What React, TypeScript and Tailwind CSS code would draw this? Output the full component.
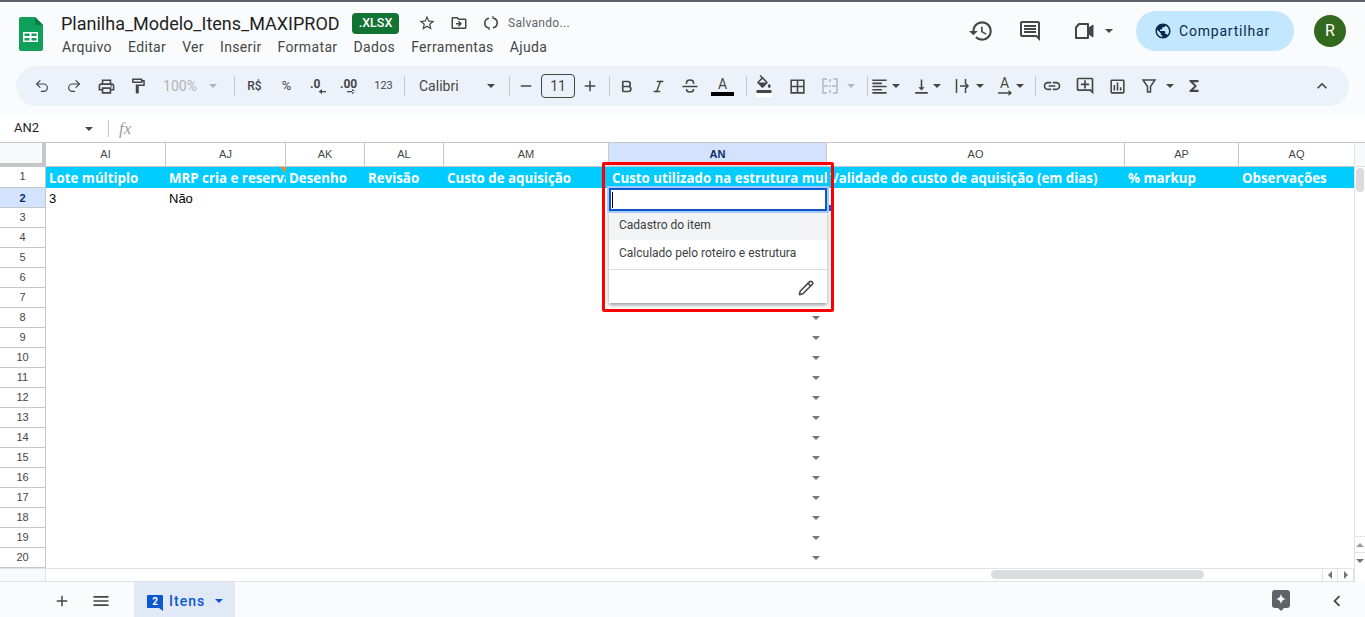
import {
  MdOutlinePrint, MdOutlineFormatPaint,
  MdOutlineFormatColorFill, MdBorderAll, MdFormatAlignLeft, MdVerticalAlignBottom, MdLink,
  MdOutlineAddComment, MdOutlineInsertChart, MdFunctions, MdKeyboardArrowUp, MdHistory,
  MdOutlineComment, MdStarBorder, MdOutlineDriveFileMove, MdAdd, MdRemove, MdMenu, MdChevronLeft,
  MdPublic,
} from "react-icons/md";
import { Undo2, Redo2, Bold, Italic, Pencil } from "lucide-react";

const columns = [
  { name: "AI", width: "w-[120px]", title: "Lote múltiplo" },
  { name: "AJ", width: "w-[120px]", title: "MRP cria e reserva" },
  { name: "AK", width: "w-[79px]", title: "Desenho" },
  { name: "AL", width: "w-[79px]", title: "Revisão" },
  { name: "AM", width: "w-[165px]", title: "Custo de aquisição" },
  { name: "AN", width: "w-[218px]", title: "Custo utilizado na estrutura multinível" },
  { name: "AO", width: "w-[298px]", title: "Validade do custo de aquisição (em dias)" },
  { name: "AP", width: "w-[114px]", title: "% markup" },
  { name: "AQ", width: "w-[116px]", title: "Observações" },
];

const rows = Array.from({ length: 18 }, (_, i) => i + 3);

function Caret({ className = "", tone = "border-t-[#444746]" }: { className?: string; tone?: string }) {
  return <span className={`inline-block shrink-0 w-0 h-0 border-x-[4px] border-x-transparent border-t-[4px] ${tone} ${className}`} />;
}

function Tool({ children, className = "w-8" }: { children?: React.ReactNode; className?: string }) {
  return <div className={`h-6 flex items-center justify-center shrink-0 text-[#444746] ${className}`}>{children}</div>;
}

function Sep({ className = "" }: { className?: string }) {
  return <div className={`w-px h-5 bg-[#c7c7c7] shrink-0 ${className}`} />;
}

function SheetsLogo() {
  return (
    <svg width="24" height="34" viewBox="0 0 24 34">
      <path d="M2 0H16L24 8V32a2 2 0 0 1-2 2H2a2 2 0 0 1-2-2V2a2 2 0 0 1 2-2Z" fill="#0fa05a" />
      <path d="M16 0L24 8H18a2 2 0 0 1-2-2Z" fill="#0b7a44" />
      <path d="M4 15H19V25H4ZM5.5 16.5V19H10.5V16.5ZM12.5 16.5V19H17.5V16.5ZM5.5 21V23.5H10.5V21ZM12.5 21V23.5H17.5V21Z" fill="#fff" fillRule="evenodd" />
    </svg>
  );
}

function Header() {
  return (
    <div className="h-[64px] shrink-0 flex items-start bg-[#f9fbfd] border-t-2 border-[#5f6368]">
      <div className="ml-[19px] mt-[15px]"><SheetsLogo /></div>
      <div className="ml-[18px] mt-[8px]">
        <div className="flex items-center h-[26px]">
          <span className="text-[18px] text-[#1f1f1f] w-[279px] whitespace-nowrap">Planilha_Modelo_Itens_MAXIPROD</span>
          <span className="ml-[12px] h-[21px] w-[47px] rounded bg-[#137333] text-white text-[12.5px] font-medium flex items-center justify-center">.XLSX</span>
          <MdStarBorder className="ml-[19px] text-[#444746]" size={18} />
          <MdOutlineDriveFileMove className="ml-[14px] text-[#444746]" size={18} />
          <svg className="ml-[15px]" width="16" height="16" viewBox="0 0 16 16" fill="none" stroke="#444746" strokeWidth="1.6">
            <path d="M6 3.2A5 5 0 0 0 5 12.8M10 12.8A5 5 0 0 0 11 3.2" />
            <path d="M3 12.5H6V15M13 3.5H10V1" strokeWidth="1.2" />
          </svg>
          <span className="ml-[9px] text-[12px] tracking-[0.3px] text-[#5f6368]">Salvando...</span>
        </div>
        <div className="flex gap-[16px] text-[14px] tracking-[0.35px] text-[#444746] h-[22px] items-center ml-px">
          {["Arquivo", "Editar", "Ver", "Inserir", "Formatar", "Dados", "Ferramentas", "Ajuda"].map((m) => (
            <span key={m}>{m}</span>
          ))}
        </div>
      </div>
      <div className="ml-auto mt-[9px] flex items-center text-[#444746]">
        <MdHistory size={26} />
        <MdOutlineComment className="ml-[24px]" size={24} />
        <svg className="ml-[32px]" width="20" height="20" viewBox="0 0 20 20" fill="none" stroke="#444746" strokeWidth="2">
          <path d="M5 3H14V17H2V6.5Z" strokeLinejoin="round" />
          <path d="M14 7.5L19 4V16L14 12.5Z" fill="#444746" strokeWidth="1" />
        </svg>
        <Caret className="ml-[11px]" />
        <div className="ml-[23px] h-[40px] w-[158px] rounded-full bg-[#c2e7ff] flex items-center pl-[18px] gap-[7px] text-[14px] tracking-[0.8px] text-[#0a2a4a]">
          <MdPublic size={18} />
          Compartilhar
        </div>
        <div className="ml-[20px] mr-[19px] h-8 w-8 rounded-full bg-[#33691e] text-white flex items-center justify-center text-[16px]">R</div>
      </div>
    </div>
  );
}

function Toolbar() {
  return (
    <div className="mx-[16px] mt-[2px] h-[40px] shrink-0 rounded-full bg-[#edf2fa] flex items-center pl-[10px] text-[#444746]">
      <Tool><Undo2 size={16} strokeWidth={1.8} /></Tool>
      <Tool><Redo2 size={16} strokeWidth={1.8} /></Tool>
      <Tool><MdOutlinePrint size={19} /></Tool>
      <Tool><MdOutlineFormatPaint size={18} /></Tool>
      <Tool className="w-[72px] gap-[12px] text-[14px] text-[#b0b3b8]">100%<Caret tone="border-t-[#b0b3b8]" /></Tool>
      <Sep className="ml-[8px]" />
      <Tool className="w-[39px] text-[12px] font-medium">R$</Tool>
      <Tool className="w-[25px] text-[13px]">%</Tool>
      <Tool className="w-[39px]">
        <svg width="20" height="20" viewBox="0 0 20 20" fill="#444746"><text x="1" y="12" fontSize="12" fontWeight="700">.0</text><path d="M10 15H17V16.2H10ZM10 15.6L13 13V18.2Z" /></svg>
      </Tool>
      <Tool className="w-[25px]">
        <svg width="22" height="20" viewBox="0 0 22 20" fill="#444746"><text x="0" y="12" fontSize="12" fontWeight="700">.00</text><path d="M7 15H15V16.2H7ZM15.5 15.6L12 13V18.2Z" /></svg>
      </Tool>
      <Tool className="w-[41px] text-[11px]">123</Tool>
      <Sep />
      <Tool className="w-[104px] justify-start pl-[14px] gap-[28px] text-[14px]">Calibri<Caret /></Tool>
      <Sep />
      <Tool className="w-[31px]"><MdRemove size={18} /></Tool>
      <div className="w-[34px] h-[24px] rounded border border-[#444746] flex items-center justify-center text-[14px] shrink-0">11</div>
      <Tool className="w-[30px]"><MdAdd size={18} /></Tool>
      <Sep className="ml-[4px]" />
      <Tool className="w-[32px]"><Bold size={15} strokeWidth={2.6} /></Tool>
      <Tool><Italic size={15} strokeWidth={2.2} /></Tool>
      <Tool>
        <svg width="18" height="18" viewBox="0 0 18 18" fill="none" stroke="#444746" strokeWidth="1.5">
          <path d="M1.5 9.5H16.5M5.5 7V5.5C5.5 4 7 3 9 3S12.5 4 12.5 5.5V7M5.5 12V12.5C5.5 14 7 15 9 15S12.5 14 12.5 12.5V12" />
        </svg>
      </Tool>
      <Tool className="w-[33px] flex-col">
        <span className="text-[14px] leading-[16px]">A</span>
        <span className="w-[23px] h-[4px] bg-black" />
      </Tool>
      <Sep className="ml-[7px]" />
      <Tool className="w-[33px] flex-col">
        <MdOutlineFormatColorFill size={18} />
        <span className="w-[16px] h-[4px] bg-white" />
      </Tool>
      <Tool className="w-[34px]"><MdBorderAll size={19} /></Tool>
      <Tool className="w-[31px]">
        <svg width="18" height="18" viewBox="0 0 18 18" fill="none" stroke="#b4b6ba" strokeWidth="1.5"><path d="M6 2H2V16H6M12 2H16V16H12M9 2V5M9 8V10M9 13V16" /><path d="M3 9H7M15 9H11" /></svg>
      </Tool>
      <Caret tone="border-t-[#b4b6ba]" className="ml-[2px]" />
      <Sep className="ml-[12px]" />
      <Tool className="w-[22px]"><MdFormatAlignLeft size={19} /></Tool>
      <Caret className="ml-[2px]" />
      <Tool className="w-[32px] ml-[5px]"><MdVerticalAlignBottom size={19} /></Tool>
      <Caret className="-ml-[4px]" />
      <Tool className="w-[30px] ml-[7px]">
        <svg width="18" height="18" viewBox="0 0 18 18" fill="none" stroke="#444746" strokeWidth="1.5"><path d="M2.5 2V16M11.5 2V6M11.5 12V16M6 9H14M11 6L14 9L11 12" /></svg>
      </Tool>
      <Caret className="-ml-[2px]" />
      <Tool className="w-[29px] ml-[6px] flex-col">
        <span className="text-[14px] leading-[14px]">A</span>
        <svg width="16" height="6" viewBox="0 0 16 6" fill="none" stroke="#444746" strokeWidth="1.3"><path d="M1 3H14M11.5 .8L14 3L11.5 5.2" /></svg>
      </Tool>
      <Caret className="-ml-[3px]" />
      <Sep className="ml-[11px]" />
      <Tool><MdLink size={20} /></Tool>
      <Tool className="w-[33px]"><MdOutlineAddComment size={20} /></Tool>
      <Tool><MdOutlineInsertChart size={19} /></Tool>
      <Tool>
        <svg width="18" height="18" viewBox="0 0 18 18" fill="none" stroke="#444746" strokeWidth="1.5"><path d="M3 3H15L10.5 9.5V15H7.5V9.5Z" /></svg>
      </Tool>
      <Caret className="ml-[1px]" />
      <Tool className="w-[40px]"><MdFunctions size={18} /></Tool>
      <Tool className="ml-auto mr-[17px]"><MdKeyboardArrowUp size={20} /></Tool>
    </div>
  );
}

function FormulaBar() {
  return (
    <div className="mt-[9px] h-[28px] shrink-0 bg-white flex items-center border-b border-[#c7c7c7]">
      <span className="ml-[14px] w-[71px] pb-[2px] text-[13px] text-[#1f1f1f]">AN2</span>
      <Caret />
      <div className="ml-[15px] w-px h-[17px] bg-[#c7c7c7]" />
      <span className="ml-[10px] italic font-['Liberation_Serif',serif] text-[17px] text-[#9aa0a6]">fx</span>
    </div>
  );
}

function Dropdown() {
  return (
    <>
      {/* caixa vermelha sobre o editor */}
      <div className="absolute left-[602px] top-[19px] w-[232px] h-[150px] border-[3px] border-[#f00] rounded-[2px] z-20" />
      <div className="absolute left-[609px] top-[45px] w-[218px] z-10">
        <div className="h-[23px] border-2 border-[#0b57d0] bg-white flex items-center pl-[1px] outline outline-2 outline-[#a8c7fa]">
          <span className="w-px h-[16px] bg-black" />
        </div>
        <div className="bg-white shadow-[0_2px_4px_rgba(60,64,67,0.55)] text-[12px] text-[#3c4043] font-['Roboto',sans-serif]">
          <div className="h-[29px] bg-[#f1f3f4] flex items-center pl-[10px] pb-[2px]">Cadastro do item</div>
          <div className="h-[30px] flex items-center pl-[10px] pb-[4px] border-b border-[#dadce0]">Calculado pelo roteiro e estrutura</div>
          <div className="h-[33px] flex items-center justify-end pr-[13px] pt-[2px]">
            <Pencil size={16} strokeWidth={2.3} className="text-[#444746]" />
          </div>
        </div>
      </div>
      <div className="absolute left-[827px] top-[62px] w-[4px] h-[6px] bg-[#0b57d0] z-0" />
    </>
  );
}

function Grid() {
  return (
    <div className="relative flex-1 bg-white overflow-hidden font-['Liberation_Sans',sans-serif]">
      <div className="flex h-[24px] border-b border-[#c7c7c7]">
        <div className="w-[46px] shrink-0 bg-[#f8f9fa] border-r-[4px] border-b-[3px] border-[#c7c7c7]" />
        {columns.map((c) => (
          <div
            key={c.name}
            className={`${c.width} shrink-0 border-r border-[#c7c7c7] flex items-center justify-center text-[11px] ${c.name === "AN" ? "bg-[#d3e3fd] font-bold text-[#0b2f66]" : "text-[#444746]"}`}
          >
            {c.name}
          </div>
        ))}
      </div>

      <div className="flex h-[21px]">
        <div className="w-[46px] shrink-0 border-r border-b border-[#c7c7c7] flex items-center justify-center pb-[2px] text-[11px] text-[#444746]">1</div>
        {columns.map((c) => (
          <div key={c.name} className={`${c.width} shrink-0 relative bg-[#00ccff] overflow-hidden whitespace-nowrap pl-[3px] pt-[3px] flex items-center text-white text-[13.3px] font-bold font-['Open_Sans',sans-serif]`}>
            {c.title}
            {c.name === "AJ" && <span className="absolute right-0 top-0 w-0 h-0 border-l-[6px] border-l-transparent border-t-[6px] border-t-[#e69138]" />}
          </div>
        ))}
      </div>

      <div className="flex h-[20px]">
        <div className="w-[46px] shrink-0 bg-[#d3e3fd] border-r border-b border-[#c7c7c7] flex items-center justify-center pt-px text-[11px] font-bold text-[#0b2f66]">2</div>
        <div className="w-[120px] shrink-0 pl-[3px] pt-px text-[13px] flex items-center text-black">3</div>
        <div className="w-[120px] shrink-0 pl-[3px] pt-px text-[13px] flex items-center text-black">Não</div>
      </div>

      {rows.map((r) => (
        <div key={r} className="flex h-[20px]">
          <div className="w-[46px] shrink-0 border-r border-b border-[#c7c7c7] flex items-center justify-center text-[11px] text-[#444746]">{r}</div>
          <div className="w-[563px] shrink-0" />
          <div className="w-[218px] shrink-0 flex items-center justify-end pr-[7px]">
            <Caret tone="border-t-[#757575]" />
          </div>
        </div>
      ))}

      <div className="h-[14px] border-y border-[#e1e3e1] flex">
        <div className="w-[46px] bg-[#f8f9fa] border-r border-[#e1e3e1]" />
      </div>

      {/* barras de rolagem */}
      <div className="absolute right-0 top-0 bottom-0 w-[11px] bg-white border-l border-[#e1e3e1]">
        <div className="h-[24px] bg-[#f8f9fa] border-b border-[#e1e3e1]" />
        <div className="mt-[1px] ml-[1px] w-[8px] h-[24px] rounded-full bg-[#dadce0]" />
      </div>
      <div className="absolute right-0 top-[393px] w-[11px] border-l border-[#e1e3e1] bg-white">
        <div className="h-[16px] border-t border-[#e1e3e1] flex items-center justify-center"><Caret tone="border-t-[#9aa0a6]" className="rotate-180" /></div>
        <div className="h-[16px] border-t border-[#e1e3e1] flex items-center justify-center"><Caret tone="border-t-[#757575]" /></div>
      </div>
      <div className="absolute left-[991px] top-[427px] w-[213px] h-[9px] rounded-full bg-[#dadce0]" />
      <div className="absolute left-[1322px] top-[426px] flex h-[12px] text-[#9aa0a6]">
        <div className="w-[16px] border-x border-[#e1e3e1] flex items-center justify-center"><span className="w-0 h-0 border-y-[4px] border-y-transparent border-r-[4px] border-r-[#757575]" /></div>
        <div className="w-[16px] border-r border-[#e1e3e1] flex items-center justify-center"><span className="w-0 h-0 border-y-[4px] border-y-transparent border-l-[4px] border-l-[#757575]" /></div>
      </div>

      <Dropdown />
    </div>
  );
}

function SheetBar() {
  return (
    <div className="h-[35px] shrink-0 bg-[#f9fbfd] flex items-center text-[#444746]">
      <MdAdd className="ml-[53px] mt-[2px]" size={18} />
      <MdMenu className="ml-[20px] mt-[2px]" size={20} />
      <div className="ml-[23px] w-[101px] h-full bg-[#e1e9f7] flex items-center pt-[3px] pl-[13px] text-[#0b57d0]">
        <span className="relative w-[16px] h-[13px] bg-[#0b57d0] rounded-[1px] text-white text-[10px] font-bold flex items-center justify-center">
          2
          <span className="absolute right-0 top-full w-0 h-0 border-l-[4px] border-l-transparent border-t-[3px] border-t-[#0b57d0]" />
        </span>
        <span className="ml-[6px] text-[14px] font-medium tracking-[1px]">Itens</span>
        <Caret tone="border-t-[#0b57d0]" className="ml-[10px]" />
      </div>
      <svg className="ml-auto mr-[36px] mt-[2px]" width="18" height="21" viewBox="0 0 18 21">
        <path d="M3 0H15a3 3 0 0 1 3 3V15a3 3 0 0 1-3 3H12L9 21L6 18H3a3 3 0 0 1-3-3V3a3 3 0 0 1 3-3Z" fill="#5f6368" />
        <path d="M9 3.5C9.6 7 10.5 8.2 14 9C10.5 9.8 9.6 11 9 14.5C8.4 11 7.5 9.8 4 9C7.5 8.2 8.4 7 9 3.5Z" fill="#fff" />
      </svg>
      <MdChevronLeft className="mr-[17px] mt-[2px]" size={22} />
    </div>
  );
}

export default function App() {
  return (
    <div className="w-[1365px] h-[617px] overflow-hidden flex flex-col bg-[#f9fbfd] font-['Roboto',sans-serif]">
      <Header />
      <Toolbar />
      <FormulaBar />
      <Grid />
      <SheetBar />
    </div>
  );
}
